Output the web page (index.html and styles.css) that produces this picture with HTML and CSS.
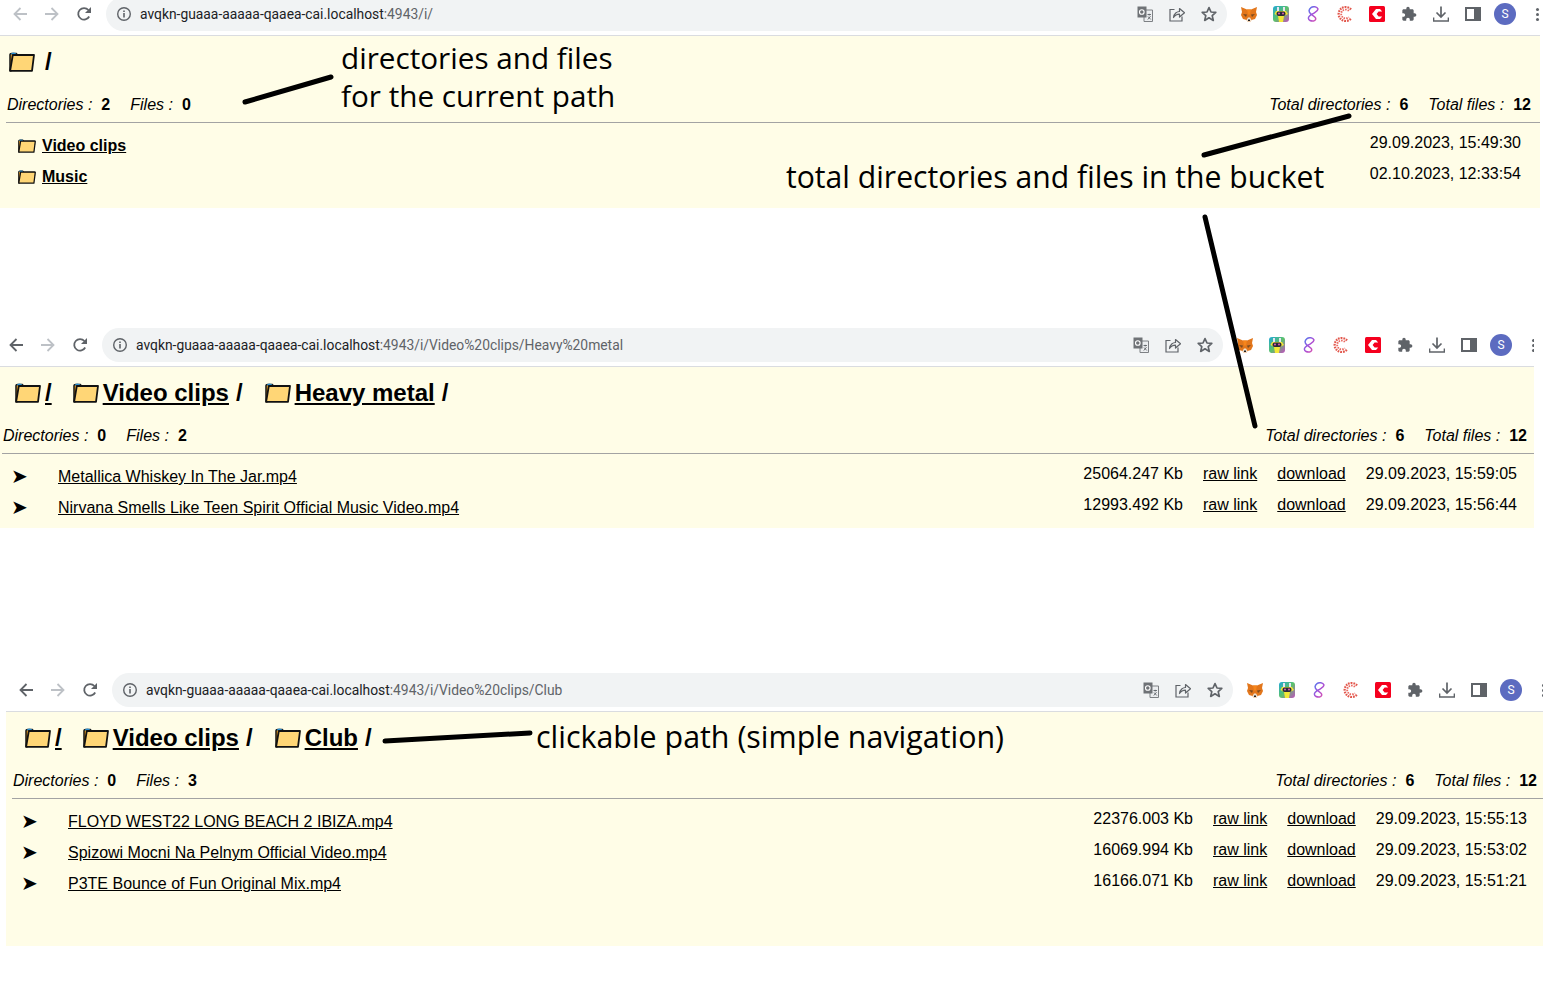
FILE: index.html
```html
<!DOCTYPE html>
<html lang="en">
    <head>
        <meta charset="utf-8">
        <title>Bucket browser</title>
        <link rel="stylesheet" href="styles.css">
    </head>
    <body>
        <svg class="icon-defs" width="0" height="0">
            <defs>
                <linearGradient id="rainbow" x1="0" y1="0" x2="1" y2="1">
                    <stop offset="0" stop-color="#1fa8d8"/>
                    <stop offset="0.5" stop-color="#5cc26a"/>
                    <stop offset="1" stop-color="#c24ec0"/>
                </linearGradient>
                <linearGradient id="snake" x1="0" y1="0" x2="1" y2="1">
                    <stop offset="0" stop-color="#4c7ef0"/>
                    <stop offset="0.5" stop-color="#a64fd8"/>
                    <stop offset="1" stop-color="#e052a8"/>
                </linearGradient>
            </defs>
            <symbol id="i-folder" viewBox="0 0 26 20">
                <path d="M1 18.8V2.8Q1 1.4 2.6 1.4H7L8.4 2.8H24V8H5L2 18.8Z" fill="#f5a623" stroke="#111" stroke-width="1.5" stroke-linejoin="round"/>
                <path d="M1.6 2.2Q2.4 .5 4.4 .5T8 2.6H3Z" fill="#2b8fd0"/>
                <path d="M1.1 18.8L3.8 3H25L23 18.8Z" fill="#ffd676" stroke="#111" stroke-width="1.8" stroke-linejoin="round"/>
            </symbol>
            <symbol id="i-back" viewBox="0 0 16 16">
                <path d="M15 8H2.5M8.5 2L2.5 8L8.5 14" fill="none" stroke="currentColor" stroke-width="1.8"/>
            </symbol>
            <symbol id="i-forward" viewBox="0 0 16 16">
                <path d="M1 8H13.5M7.5 2L13.5 8L7.5 14" fill="none" stroke="currentColor" stroke-width="1.8"/>
            </symbol>
            <symbol id="i-reload" viewBox="0 0 16 16">
                <path d="M13.2 10.5A5.8 5.8 0 1 1 12.4 4" fill="none" stroke="currentColor" stroke-width="1.8"/>
                <path d="M15 1V7H9Z" fill="currentColor"/>
            </symbol>
            <symbol id="i-info" viewBox="0 0 16 16">
                <circle cx="8" cy="8" r="6.3" fill="none" stroke="currentColor" stroke-width="1.4"/>
                <path d="M7.2 7H8.8V11.6H7.2ZM7.2 4.4H8.8V5.9H7.2Z" fill="currentColor"/>
            </symbol>
            <symbol id="i-translate" viewBox="0 0 16 16">
                <path d="M7 4H15.5V15.5H7Z" fill="#eceef0" stroke="#7d8084" stroke-width="1"/>
                <path d="M.5 .5H9.5V11.5H.5Z" fill="#6f7276"/>
                <circle cx="4.8" cy="6" r="2.3" fill="none" stroke="#fff" stroke-width="1.1"/>
                <path d="M10.5 8.5H14M12.2 7.8V9.5M10.8 13.5L13.5 10.2M11 10.5L13.8 13.5" stroke="#5f6368" stroke-width=".9" fill="none"/>
            </symbol>
            <symbol id="i-share" viewBox="0 0 16 16">
                <path d="M5.5 3.5H1V15H13V10.5" fill="none" stroke="currentColor" stroke-width="1.2"/>
                <path d="M4.5 11.5C5 7.5 8 5.5 10.5 5.5V2.5L15.5 6.8L10.5 11V8.2C8 8.2 6 9.2 4.5 11.5Z" fill="none" stroke="currentColor" stroke-width="1.2" stroke-linejoin="round"/>
            </symbol>
            <symbol id="i-star" viewBox="0 0 16 16">
                <path d="M8 1.6L10 6L14.8 6.4L11.2 9.6L12.3 14.4L8 11.8L3.7 14.4L4.8 9.6L1.2 6.4L6 6Z" fill="none" stroke="currentColor" stroke-width="1.7" stroke-linejoin="round"/>
            </symbol>
            <symbol id="i-fox" viewBox="0 0 16 16">
                <path d="M0 1L6 3.5H10L16 1L15 6L16 9L14 13L10.5 14L9.5 15.5H6.5L5.5 14L2 13L0 9L1 6Z" fill="#e2761b"/>
                <path d="M6 3.5H10L9 8.5H7Z" fill="#f6851b"/>
                <path d="M2 8L6 8.5L5 11ZM14 8L10 8.5L11 11Z" fill="#7a4a20"/>
                <path d="M5.5 14L7 11.5H9L10.5 14L9.5 15.5H6.5Z" fill="#f0e2d0"/>
                <path d="M7 13.6H9V15H7Z" fill="#222"/>
            </symbol>
            <symbol id="i-rainbow" viewBox="0 0 16 16">
                <rect width="16" height="16" rx="3" fill="url(#rainbow)"/>
                <path d="M5 1V5M11 1V5" stroke="#e8e4f4" stroke-width="2"/>
                <path d="M3 5H13L15 8L11 10L10 16H6L5 10L1.5 8Z" fill="#f2e838"/>
                <rect x="3.5" y="5.5" width="9" height="4.5" rx="2" fill="#2b2b3a"/>
                <circle cx="6" cy="7.6" r="1" fill="#e060b0"/>
                <circle cx="10" cy="7.6" r="1" fill="#e060b0"/>
            </symbol>
            <symbol id="i-snake" viewBox="0 0 16 16">
                <path d="M13 3C12 .4 8 .2 6 1.6C3.5 3.4 3.6 5.8 5.5 7.6L10 11.2C11.4 12.6 10.6 14.6 8.5 15C6 15.3 3.6 14.4 3.4 12.2C3.3 10 6.5 8.6 8.5 7.4C11 5.8 13 5 13 3Z" fill="none" stroke="url(#snake)" stroke-width="1.5"/>
            </symbol>
            <symbol id="i-ring" viewBox="0 0 16 16">
                <path d="M14 3.5A7 7 0 1 0 14 12.5" fill="none" stroke="#e2574c" stroke-width="2.2" stroke-dasharray="1.7 .9"/>
                <path d="M11.8 5A4.4 4.4 0 1 0 11.8 11" fill="none" stroke="#ea6a62" stroke-width="1.8" stroke-dasharray="1.5 1"/>
            </symbol>
            <symbol id="i-redc" viewBox="0 0 16 16">
                <rect width="16" height="16" rx="1.5" fill="#f5001e"/>
                <path d="M7 3H11L13.2 5.6H9.6L7.6 8L9.6 10.4H13.2L11 13H7L3 8Z" fill="#fff"/>
            </symbol>
            <symbol id="i-puzzle" viewBox="0 0 24 24">
                <path d="M20.5 11H19V7c0-1.1-.9-2-2-2h-4V3.5C13 2.12 11.88 1 10.5 1S8 2.12 8 3.5V5H4c-1.1 0-1.99.9-1.99 2v3.8H3.5c1.49 0 2.7 1.21 2.7 2.7s-1.21 2.7-2.7 2.7H2V20c0 1.1.9 2 2 2h3.8v-1.5c0-1.49 1.21-2.7 2.7-2.7 1.49 0 2.7 1.21 2.7 2.7V22H17c1.1 0 2-.9 2-2v-4h1.5c1.38 0 2.5-1.12 2.5-2.5S21.88 11 20.5 11z" fill="currentColor"/>
            </symbol>
            <symbol id="i-download" viewBox="0 0 16 16">
                <path d="M8 .5V10.5M3.5 6.5L8 11L12.5 6.5M.5 11.5V15H15.5V11.5" fill="none" stroke="currentColor" stroke-width="1.7"/>
            </symbol>
            <symbol id="i-sidebar" viewBox="0 0 16 16">
                <path d="M1 2H15V14H1Z" fill="none" stroke="currentColor" stroke-width="2"/>
                <path d="M9 2H15V14H9Z" fill="currentColor"/>
            </symbol>
        </svg>

        <!-- first capture: bucket root -->
        <section class="shot shot-root">
            <div class="toolbar">
                <span class="nav nav-off"><svg class="ico"><use href="#i-back"/></svg></span>
                <span class="nav nav-off"><svg class="ico"><use href="#i-forward"/></svg></span>
                <span class="nav"><svg class="ico"><use href="#i-reload"/></svg></span>
                <div class="omnibox">
                    <svg class="ico info"><use href="#i-info"/></svg>
                    <span class="url">avqkn-guaaa-aaaaa-qaaea-cai.localhost<span class="url-path">:4943/i/</span></span>
                    <span class="omni-btn"><svg class="ico"><use href="#i-translate"/></svg></span>
                    <span class="omni-btn"><svg class="ico"><use href="#i-share"/></svg></span>
                    <span class="omni-btn"><svg class="ico"><use href="#i-star"/></svg></span>
                </div>
                <div class="extensions">
                    <span class="ext"><svg class="ico"><use href="#i-fox"/></svg></span>
                    <span class="ext"><svg class="ico"><use href="#i-rainbow"/></svg></span>
                    <span class="ext"><svg class="ico"><use href="#i-snake"/></svg></span>
                    <span class="ext"><svg class="ico"><use href="#i-ring"/></svg></span>
                    <span class="ext"><svg class="ico"><use href="#i-redc"/></svg></span>
                    <span class="ext"><svg class="ico"><use href="#i-puzzle"/></svg></span>
                    <span class="ext"><svg class="ico"><use href="#i-download"/></svg></span>
                    <span class="ext"><svg class="ico"><use href="#i-sidebar"/></svg></span>
                    <span class="ext"><span class="avatar">S</span></span>
                    <span class="ext"><span class="dots"></span></span>
                </div>
            </div>
            <div class="content">
                <h1 class="path path-root">
                    <svg class="folder"><use href="#i-folder"/></svg>
                    <span class="root-slash">/</span>
                </h1>
                <div class="stats">
                    <div class="stat-group">
                        <span class="stat"><i>Directories :</i><b>2</b></span>
                        <span class="stat"><i>Files :</i><b>0</b></span>
                    </div>
                    <div class="stat-group">
                        <span class="stat"><i>Total directories :</i><b>6</b></span>
                        <span class="stat"><i>Total files :</i><b>12</b></span>
                    </div>
                </div>
                <div class="rows">
                    <div class="row">
                        <svg class="folder-small"><use href="#i-folder"/></svg>
                        <a class="dir-name" href="#">Video clips</a>
                        <span class="date">29.09.2023, 15:49:30</span>
                    </div>
                    <div class="row">
                        <svg class="folder-small"><use href="#i-folder"/></svg>
                        <a class="dir-name" href="#">Music</a>
                        <span class="date">02.10.2023, 12:33:54</span>
                    </div>
                </div>
            </div>
        </section>

        <!-- second capture: Heavy metal -->
        <section class="shot shot-metal">
            <div class="toolbar">
                <span class="nav"><svg class="ico"><use href="#i-back"/></svg></span>
                <span class="nav nav-off"><svg class="ico"><use href="#i-forward"/></svg></span>
                <span class="nav"><svg class="ico"><use href="#i-reload"/></svg></span>
                <div class="omnibox">
                    <svg class="ico info"><use href="#i-info"/></svg>
                    <span class="url">avqkn-guaaa-aaaaa-qaaea-cai.localhost<span class="url-path">:4943/i/Video%20clips/Heavy%20metal</span></span>
                    <span class="omni-btn"><svg class="ico"><use href="#i-translate"/></svg></span>
                    <span class="omni-btn"><svg class="ico"><use href="#i-share"/></svg></span>
                    <span class="omni-btn"><svg class="ico"><use href="#i-star"/></svg></span>
                </div>
                <div class="extensions">
                    <span class="ext"><svg class="ico"><use href="#i-fox"/></svg></span>
                    <span class="ext"><svg class="ico"><use href="#i-rainbow"/></svg></span>
                    <span class="ext"><svg class="ico"><use href="#i-snake"/></svg></span>
                    <span class="ext"><svg class="ico"><use href="#i-ring"/></svg></span>
                    <span class="ext"><svg class="ico"><use href="#i-redc"/></svg></span>
                    <span class="ext"><svg class="ico"><use href="#i-puzzle"/></svg></span>
                    <span class="ext"><svg class="ico"><use href="#i-download"/></svg></span>
                    <span class="ext"><svg class="ico"><use href="#i-sidebar"/></svg></span>
                    <span class="ext"><span class="avatar">S</span></span>
                    <span class="ext"><span class="dots"></span></span>
                </div>
            </div>
            <div class="content">
                <h1 class="path">
                    <span class="crumb crumb-first"><svg class="folder"><use href="#i-folder"/></svg><a href="#">/</a></span>
                    <span class="crumb"><svg class="folder"><use href="#i-folder"/></svg><a href="#">Video clips</a><span class="sep">/</span></span>
                    <span class="crumb"><svg class="folder"><use href="#i-folder"/></svg><a href="#">Heavy metal</a><span class="sep">/</span></span>
                </h1>
                <div class="stats">
                    <div class="stat-group">
                        <span class="stat"><i>Directories :</i><b>0</b></span>
                        <span class="stat"><i>Files :</i><b>2</b></span>
                    </div>
                    <div class="stat-group">
                        <span class="stat"><i>Total directories :</i><b>6</b></span>
                        <span class="stat"><i>Total files :</i><b>12</b></span>
                    </div>
                </div>
                <div class="rows">
                    <div class="row">
                        <span class="arrow">➤</span>
                        <a class="file-name" href="#">Metallica Whiskey In The Jar.mp4</a>
                        <span class="size">25064.247 Kb</span>
                        <a href="#">raw link</a>
                        <a href="#">download</a>
                        <span class="date">29.09.2023, 15:59:05</span>
                    </div>
                    <div class="row">
                        <span class="arrow">➤</span>
                        <a class="file-name" href="#">Nirvana Smells Like Teen Spirit Official Music Video.mp4</a>
                        <span class="size">12993.492 Kb</span>
                        <a href="#">raw link</a>
                        <a href="#">download</a>
                        <span class="date">29.09.2023, 15:56:44</span>
                    </div>
                </div>
            </div>
        </section>

        <!-- third capture: Club -->
        <section class="shot shot-club">
            <div class="toolbar">
                <span class="nav"><svg class="ico"><use href="#i-back"/></svg></span>
                <span class="nav nav-off"><svg class="ico"><use href="#i-forward"/></svg></span>
                <span class="nav"><svg class="ico"><use href="#i-reload"/></svg></span>
                <div class="omnibox">
                    <svg class="ico info"><use href="#i-info"/></svg>
                    <span class="url">avqkn-guaaa-aaaaa-qaaea-cai.localhost<span class="url-path">:4943/i/Video%20clips/Club</span></span>
                    <span class="omni-btn"><svg class="ico"><use href="#i-translate"/></svg></span>
                    <span class="omni-btn"><svg class="ico"><use href="#i-share"/></svg></span>
                    <span class="omni-btn"><svg class="ico"><use href="#i-star"/></svg></span>
                </div>
                <div class="extensions">
                    <span class="ext"><svg class="ico"><use href="#i-fox"/></svg></span>
                    <span class="ext"><svg class="ico"><use href="#i-rainbow"/></svg></span>
                    <span class="ext"><svg class="ico"><use href="#i-snake"/></svg></span>
                    <span class="ext"><svg class="ico"><use href="#i-ring"/></svg></span>
                    <span class="ext"><svg class="ico"><use href="#i-redc"/></svg></span>
                    <span class="ext"><svg class="ico"><use href="#i-puzzle"/></svg></span>
                    <span class="ext"><svg class="ico"><use href="#i-download"/></svg></span>
                    <span class="ext"><svg class="ico"><use href="#i-sidebar"/></svg></span>
                    <span class="ext"><span class="avatar">S</span></span>
                    <span class="ext"><span class="dots"></span></span>
                </div>
            </div>
            <div class="content">
                <h1 class="path">
                    <span class="crumb crumb-first"><svg class="folder"><use href="#i-folder"/></svg><a href="#">/</a></span>
                    <span class="crumb"><svg class="folder"><use href="#i-folder"/></svg><a href="#">Video clips</a><span class="sep">/</span></span>
                    <span class="crumb"><svg class="folder"><use href="#i-folder"/></svg><a href="#">Club</a><span class="sep">/</span></span>
                </h1>
                <div class="stats">
                    <div class="stat-group">
                        <span class="stat"><i>Directories :</i><b>0</b></span>
                        <span class="stat"><i>Files :</i><b>3</b></span>
                    </div>
                    <div class="stat-group">
                        <span class="stat"><i>Total directories :</i><b>6</b></span>
                        <span class="stat"><i>Total files :</i><b>12</b></span>
                    </div>
                </div>
                <div class="rows">
                    <div class="row">
                        <span class="arrow">➤</span>
                        <a class="file-name" href="#">FLOYD WEST22 LONG BEACH 2 IBIZA.mp4</a>
                        <span class="size">22376.003 Kb</span>
                        <a href="#">raw link</a>
                        <a href="#">download</a>
                        <span class="date">29.09.2023, 15:55:13</span>
                    </div>
                    <div class="row">
                        <span class="arrow">➤</span>
                        <a class="file-name" href="#">Spizowi Mocni Na Pelnym Official Video.mp4</a>
                        <span class="size">16069.994 Kb</span>
                        <a href="#">raw link</a>
                        <a href="#">download</a>
                        <span class="date">29.09.2023, 15:53:02</span>
                    </div>
                    <div class="row">
                        <span class="arrow">➤</span>
                        <a class="file-name" href="#">P3TE Bounce of Fun Original Mix.mp4</a>
                        <span class="size">16166.071 Kb</span>
                        <a href="#">raw link</a>
                        <a href="#">download</a>
                        <span class="date">29.09.2023, 15:51:21</span>
                    </div>
                </div>
            </div>
        </section>

        <!-- hand drawn notes over the captures -->
        <svg class="strokes" width="1568" height="988">
            <path d="M245 102L331 77"/>
            <path d="M1204 155L1349 116"/>
            <path d="M1205 217L1255 426"/>
            <path d="M385 741L530 733"/>
        </svg>
        <div class="note note-current">directories and files<br>for the current path</div>
        <div class="note note-bucket">total directories and files in the bucket</div>
        <div class="note note-path">clickable path (simple navigation)</div>
    </body>
</html>
```

FILE: styles.css
```css
html, body {
    margin: 0;
    height: 988px;
    overflow: hidden;
    background-color: white;
}

body {
    position: relative;
    font-family: "Liberation Sans", Arial, sans-serif;
    font-size: 16px;
    color: #000;
}

a {
    color: #000;
    text-decoration: underline;
}

.icon-defs {
    position: absolute;
}

/* each capture sits freely on the canvas */
.shot {
    position: absolute;
    overflow: hidden;
}

.shot-root {
    left: 0;
    top: -4px;
    width: 1540px;
}

.shot-metal {
    left: -4px;
    top: 327px;
    width: 1538px;
}

.shot-club {
    left: 6px;
    top: 672px;
    width: 1537px;
}

/* Browser toolbar */
.toolbar {
    display: flex;
    align-items: center;
    width: 1560px;
    height: 36px;
    padding: 0 0 3px 4px;
    box-sizing: content-box;
    border-bottom: 1px solid #dadce0;
    background-color: white;
}

.nav {
    flex: 0 0 32px;
    display: flex;
    justify-content: center;
    color: #5f6368;
}

.nav-off {
    color: #bdc1c6;
}

.ico {
    width: 16px;
    height: 16px;
}

.omnibox {
    flex: 0 0 1121px;
    box-sizing: border-box;
    height: 34px;
    margin-left: 6px;
    padding: 0 2px 0 10px;
    display: flex;
    align-items: center;
    background-color: #f1f3f4;
    border-radius: 17px;
    color: #5f6368;
}

.info {
    flex: none;
    margin-right: 8px;
}

.url {
    flex: 1;
    font-family: Roboto, sans-serif;
    font-size: 13.85px;
    color: #202124;
    white-space: nowrap;
}

.url-path {
    color: #5f6368;
}

.omni-btn {
    flex: 0 0 32px;
    display: flex;
    justify-content: center;
}

.extensions {
    display: flex;
    margin-left: 6px;
    color: #5f6368;
}

.ext {
    flex: 0 0 32px;
    height: 22px;
    display: flex;
    align-items: center;
    justify-content: center;
}

.avatar {
    width: 22px;
    height: 22px;
    border-radius: 50%;
    background-color: #5c6bc0;
    color: white;
    font-family: Roboto, sans-serif;
    font-size: 12px;
    line-height: 22px;
    text-align: center;
}

.dots {
    width: 3px;
    height: 3px;
    border-radius: 50%;
    background-color: #5f6368;
    box-shadow: 0 -5px 0 #5f6368, 0 5px 0 #5f6368;
}

/* Page content */
.content {
    background-color: #fffde7;
    width: 1560px;
}

.shot-root .content {
    height: 172px;
}

.shot-metal .content {
    height: 161px;
}

.shot-club .content {
    height: 234px;
}

.path {
    display: flex;
    align-items: center;
    height: 52px;
    margin: 0;
    padding-left: 19px;
    font-size: 24px;
    font-weight: bold;
}

.path-root {
    padding-left: 9px;
}

.root-slash {
    margin-left: 6px;
}

.crumb {
    display: flex;
    align-items: center;
    margin-right: 22px;
}

.crumb-first {
    margin-right: 21px;
}

.folder {
    width: 26px;
    height: 20px;
    margin-right: 4px;
}

.sep {
    margin-left: 7px;
}

.stats {
    box-sizing: border-box;
    width: 1524px;
    height: 34px;
    margin-left: 7px;
    display: flex;
    justify-content: space-between;
    line-height: 34px;
}

.stat-group {
    display: flex;
    gap: 20px;
}

.stat i {
    margin-right: 9px;
}

.rows {
    margin-left: 6px;
    padding-top: 11px;
    border-top: 1px solid #a3a3a3;
    width: 1554px;
}

.row {
    display: flex;
    gap: 20px;
    box-sizing: border-box;
    width: 1515px;
    height: 31px;
    line-height: 18px;
    white-space: nowrap;
}

.folder-small {
    flex: none;
    width: 18px;
    height: 14px;
    margin: 5px -14px 0 12px;
}

.dir-name {
    flex: 1;
    margin-top: 3px;
    font-weight: bold;
}

.arrow {
    flex: 0 0 27px;
    margin: 2px 0 0 9px;
    font-family: "DejaVu Sans", sans-serif;
    font-size: 20px;
}

.file-name {
    flex: 1;
    margin-top: 3px;
}

/* Notes */
.strokes {
    position: absolute;
    left: 0;
    top: 0;
    pointer-events: none;
}

.strokes path {
    fill: none;
    stroke: #000;
    stroke-width: 5;
    stroke-linecap: round;
}

.note {
    position: absolute;
    font-family: "Open Sans", sans-serif;
    font-size: 30px;
    line-height: 38px;
    white-space: nowrap;
}

.note-current {
    left: 341px;
    top: 39px;
    font-size: 29.7px;
}

.note-bucket {
    left: 786px;
    top: 158px;
    font-size: 30.15px;
}

.note-path {
    left: 536px;
    top: 718px;
    font-size: 30.4px;
}
```
